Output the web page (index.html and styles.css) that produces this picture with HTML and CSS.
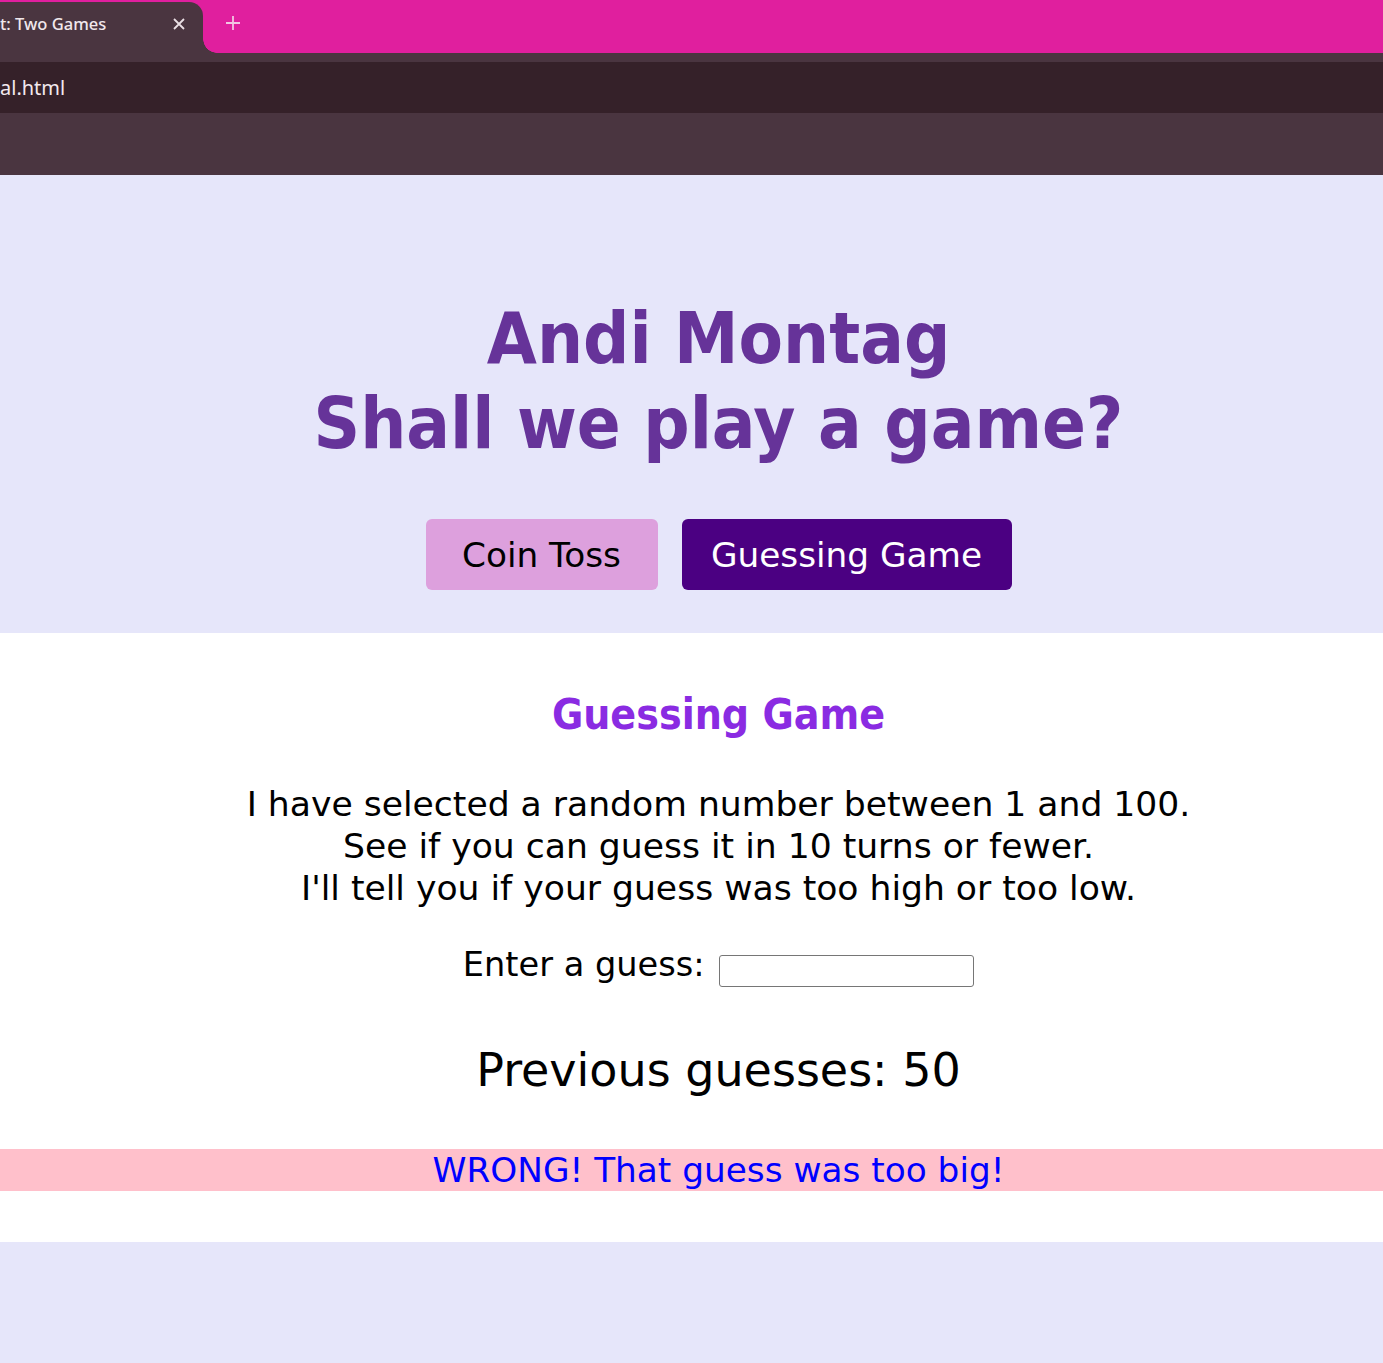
FILE: index.html
```html
<!DOCTYPE html>
<html lang="en">
<head>
<meta charset="utf-8">
<title>Two Games</title>
<link rel="stylesheet" href="styles.css">
</head>
<body>
<div class="chrome">
  <div class="tabstrip">
    <div class="tab">
      <span class="tab-title">t: Two Games</span>
      <svg class="tab-close" width="14" height="14" viewBox="0 0 14 14"><path d="M2 2 L12 12 M12 2 L2 12" stroke="#eadfe4" stroke-width="1.8" fill="none"/></svg>
    </div>
    <svg class="newtab" width="18" height="18" viewBox="0 0 18 18"><path d="M9 2 V16 M2 9 H16" stroke="#f1c6e2" stroke-width="1.8" fill="none"/></svg>
  </div>
  <div class="toolbar-gap"></div>
  <div class="omnibox">al.html</div>
  <div class="bookmarks"></div>
</div>

<header class="hero shift">
  <h1 class="title">Andi Montag<br>Shall we play a game?</h1>
  <div class="buttons">
    <button class="btn btn-coin">Coin Toss</button>
    <button class="btn btn-guess">Guessing Game</button>
  </div>
</header>

<main class="game">
  <div class="game-body shift">
    <h2 class="game-title">Guessing Game</h2>
    <p class="intro">I have selected a random number between 1 and 100.<br>See if you can guess it in 10 turns or fewer.<br>I'll tell you if your guess was too high or too low.</p>
    <div class="entry">Enter a guess: <input class="guess-input" type="text"></div>
    <div class="previous">Previous guesses: 50</div>
  </div>
  <div class="result shift">WRONG! That guess was too big!</div>
</main>

<footer class="footer"></footer>
</body>
</html>
```

FILE: styles.css
```css
html, body {
  margin: 0;
  padding: 0;
}

body {
  background: #e6e6fa;
  font-family: "DejaVu Sans", sans-serif;
  color: #000;
}

/* ---------- browser chrome ---------- */
.chrome {
  background: #4a3540;
}

.tabstrip {
  height: 53px;
  background: #e01f9e;
  display: flex;
  align-items: flex-end;
}

.tab {
  position: relative;
  width: 203px;
  height: 51px;
  background: #4a3540;
  border-top-right-radius: 14px;
  display: flex;
  align-items: flex-start;
  box-sizing: border-box;
  padding-top: 10px;
}

.tab::after {
  content: "";
  position: absolute;
  right: -14px;
  bottom: 0;
  width: 14px;
  height: 14px;
  background: radial-gradient(circle at 100% 0, transparent 13.5px, #4a3540 14px);
}

.tab-title {
  font-family: "Noto Sans", "Open Sans", sans-serif;
  font-size: 16.5px;
  font-weight: 500;
  line-height: 24px;
  color: #f1e8ec;
  flex: 1;
}

.tab-close {
  margin-right: 17px;
  margin-top: 5px;
}

.newtab {
  margin-left: 21px;
  align-self: flex-start;
  margin-top: 14px;
}

.toolbar-gap {
  height: 9px;
}

.omnibox {
  height: 51px;
  background: #352129;
  color: #f3e9ee;
  font-family: "Noto Sans", "Open Sans", sans-serif;
  font-size: 20px;
  line-height: 52px;
}

.bookmarks {
  height: 62px;
}

/* ---------- page ---------- */
.shift {
  padding-left: 54px;
}

.hero {
  background: #e6e6fa;
  padding-top: 121px;
  padding-bottom: 43px;
  text-align: center;
}

.title {
  margin: 0;
  font-family: "DejaVu Sans Condensed", "DejaVu Sans", sans-serif;
  font-weight: bold;
  font-size: 72px;
  line-height: 85px;
  color: #663399;
}

.buttons {
  margin-top: 53px;
  display: flex;
  justify-content: center;
  gap: 24px;
}

.btn {
  height: 71px;
  border: none;
  border-radius: 6px;
  font-family: "DejaVu Sans", sans-serif;
  font-size: 34.3px;
  cursor: pointer;
}

.btn-coin {
  background: #dda0dd;
  color: #000;
  width: 232px;
  padding: 0;
}

.btn-guess {
  background: #4b0082;
  color: #fff;
  width: 330px;
  padding: 0;
}

.game {
  background: #fff;
  padding-top: 57px;
  padding-bottom: 51px;
  text-align: center;
}

.game-title {
  margin: 0;
  font-family: "DejaVu Sans Condensed", "DejaVu Sans", sans-serif;
  font-weight: bold;
  font-size: 42.4px;
  line-height: 50px;
  color: #8a2be2;
}

.intro {
  margin: 43px 0 0;
  font-size: 34.6px;
  line-height: 42px;
}

.entry {
  margin-top: 35px;
  font-size: 33.6px;
  line-height: 42px;
  height: 42px;
}

.guess-input {
  width: 255px;
  height: 32px;
  box-sizing: border-box;
  border: 1px solid #767676;
  border-radius: 3px;
  padding: 1px 2px;
  font-family: "Liberation Sans", sans-serif;
  font-size: 13.33px;
  margin-left: 4px;
  vertical-align: 1px;
}

.previous {
  margin-top: 56px;
  font-size: 46px;
  line-height: 56px;
}

.result {
  margin-top: 51px;
  background: #ffc0cb;
  color: #0000ff;
  font-size: 34.3px;
  line-height: 42px;
}

.footer {
  height: 121px;
  background: #e6e6fa;
}
```
